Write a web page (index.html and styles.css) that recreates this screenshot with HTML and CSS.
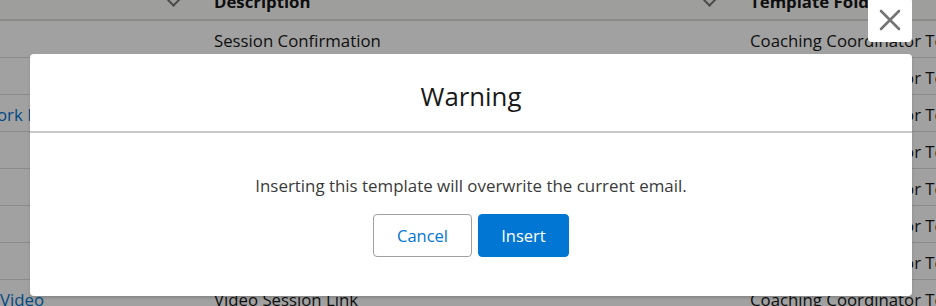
FILE: index.html
```html
<!DOCTYPE html>
<html lang="en">
<head>
    <meta charset="UTF-8">
    <meta name="viewport" content="width=device-width, initial-scale=1.0">
    <title>Email Templates</title>
    <link rel="stylesheet" href="styles.css">
</head>
<body>
    <div class="table">
        <div class="row head">
            <div class="cell"><span class="chevron"></span></div>
            <div class="cell"><span class="title">Description</span><span class="chevron"></span></div>
            <div class="cell"><span class="title">Template Folder</span></div>
        </div>
        <div class="row">
            <div class="cell"></div>
            <div class="cell">Session Confirmation</div>
            <div class="cell">Coaching Coordinator Templates</div>
        </div>
        <div class="row">
            <div class="cell"></div>
            <div class="cell">Session Reminder</div>
            <div class="cell">Coaching Coordinator Templates</div>
        </div>
        <div class="row">
            <div class="cell"><a href="#" class="cut">ork Invite</a></div>
            <div class="cell">Network Invitation</div>
            <div class="cell">Coaching Coordinator Templates</div>
        </div>
        <div class="row">
            <div class="cell"></div>
            <div class="cell">Follow Up</div>
            <div class="cell">Coaching Coordinator Templates</div>
        </div>
        <div class="row">
            <div class="cell"></div>
            <div class="cell">Session Cancelled</div>
            <div class="cell">Coaching Coordinator Templates</div>
        </div>
        <div class="row">
            <div class="cell"></div>
            <div class="cell">Session Rescheduled</div>
            <div class="cell">Coaching Coordinator Templates</div>
        </div>
        <div class="row">
            <div class="cell"></div>
            <div class="cell">Welcome</div>
            <div class="cell">Coaching Coordinator Templates</div>
        </div>
        <div class="row">
            <div class="cell"><a href="#">Video</a></div>
            <div class="cell">Video Session Link</div>
            <div class="cell">Coaching Coordinator Templates</div>
        </div>
    </div>

    <div class="backdrop">
        <button class="close" aria-label="Close">
            <svg width="22" height="22" viewBox="0 0 22 22">
                <path d="M2 2 L20 20 M20 2 L2 20" stroke="#747474" stroke-width="2.6" stroke-linecap="round"/>
            </svg>
        </button>
        <section class="modal">
            <header class="modal-header">
                <h2>Warning</h2>
            </header>
            <div class="modal-body">
                <p>Inserting this template will overwrite the current email.</p>
                <div class="actions">
                    <button class="btn btn-neutral">Cancel</button>
                    <button class="btn btn-brand">Insert</button>
                </div>
            </div>
        </section>
    </div>
</body>
</html>
```

FILE: styles.css
```css
body {
    font-family: 'Open Sans', 'Noto Sans', sans-serif;
    margin: 0;
    padding: 0;
    background: #fff;
    color: #181818;
    width: 936px;
    height: 306px;
    overflow: hidden;
    position: relative;
}
.table {
    font-size: 16.8px;
}
.row {
    display: grid;
    grid-template-columns: 200px 536px 200px;
    height: 37px;
    border-bottom: 1px solid #dddbda;
    box-sizing: border-box;
}
.row.head {
    height: 21px;
    background: #fafaf9;
    border-bottom: 2px solid #dddbda;
}
.cell {
    display: flex;
    align-items: center;
    padding-left: 14px;
    padding-top: 2px;
    white-space: nowrap;
    overflow: hidden;
}
.row .cell:first-child {
    padding-left: 0;
}
.head .cell {
    align-items: flex-start;
    justify-content: space-between;
    padding-top: 0;
    overflow: visible;
}
.head .cell:first-child {
    justify-content: flex-end;
    padding-right: 22px;
}
.head .title {
    font-weight: 700;
    line-height: 18px;
    margin-top: -7px;
}
.chevron {
    width: 7px;
    height: 7px;
    border-right: 2px solid #747474;
    border-bottom: 2px solid #747474;
    transform: rotate(45deg);
    margin-top: -4px;
}
.head .cell:nth-child(2) .chevron {
    margin-right: 22px;
}
.cell a {
    color: #0176d3;
    text-decoration: none;
}
.cell a.cut {
    margin-left: -3px;
}
.backdrop {
    position: absolute;
    inset: 0;
    background: rgba(0, 0, 0, 0.37);
    padding: 54px 24px 0 30px;
}
.close {
    position: absolute;
    top: -2px;
    right: 24px;
    width: 44px;
    height: 44px;
    border: none;
    border-radius: 4px;
    background: #fff;
    display: flex;
    align-items: center;
    justify-content: center;
    padding: 0;
}
.modal {
    background: #fff;
    border-radius: 4px;
    height: 242px;
    box-shadow: 0 2px 3px rgba(0, 0, 0, 0.16);
}
.modal-header {
    height: 77px;
    border-bottom: 2px solid #c9c9c9;
    display: flex;
    align-items: center;
    justify-content: center;
}
.modal-header h2 {
    margin: 0;
    font-size: 25.8px;
    font-weight: 400;
    color: #181818;
    padding-top: 6px;
}
.modal-body {
    text-align: center;
    padding-top: 42px;
}
.modal-body p {
    margin: 0;
    font-size: 16.9px;
    line-height: 22px;
    color: #3a3a3a;
}
.actions {
    display: flex;
    justify-content: center;
    gap: 6px;
    margin-top: 17px;
}
.btn {
    font-family: inherit;
    font-size: 16.5px;
    height: 43px;
    padding: 0;
    border-radius: 4px;
    cursor: pointer;
}
.btn-neutral {
    background: #fff;
    border: 1px solid #a0a0a0;
    color: #0176d3;
    width: 99px;
}
.btn-brand {
    background: #0176d3;
    border: 1px solid #0176d3;
    color: #fff;
    width: 91px;
}
```
